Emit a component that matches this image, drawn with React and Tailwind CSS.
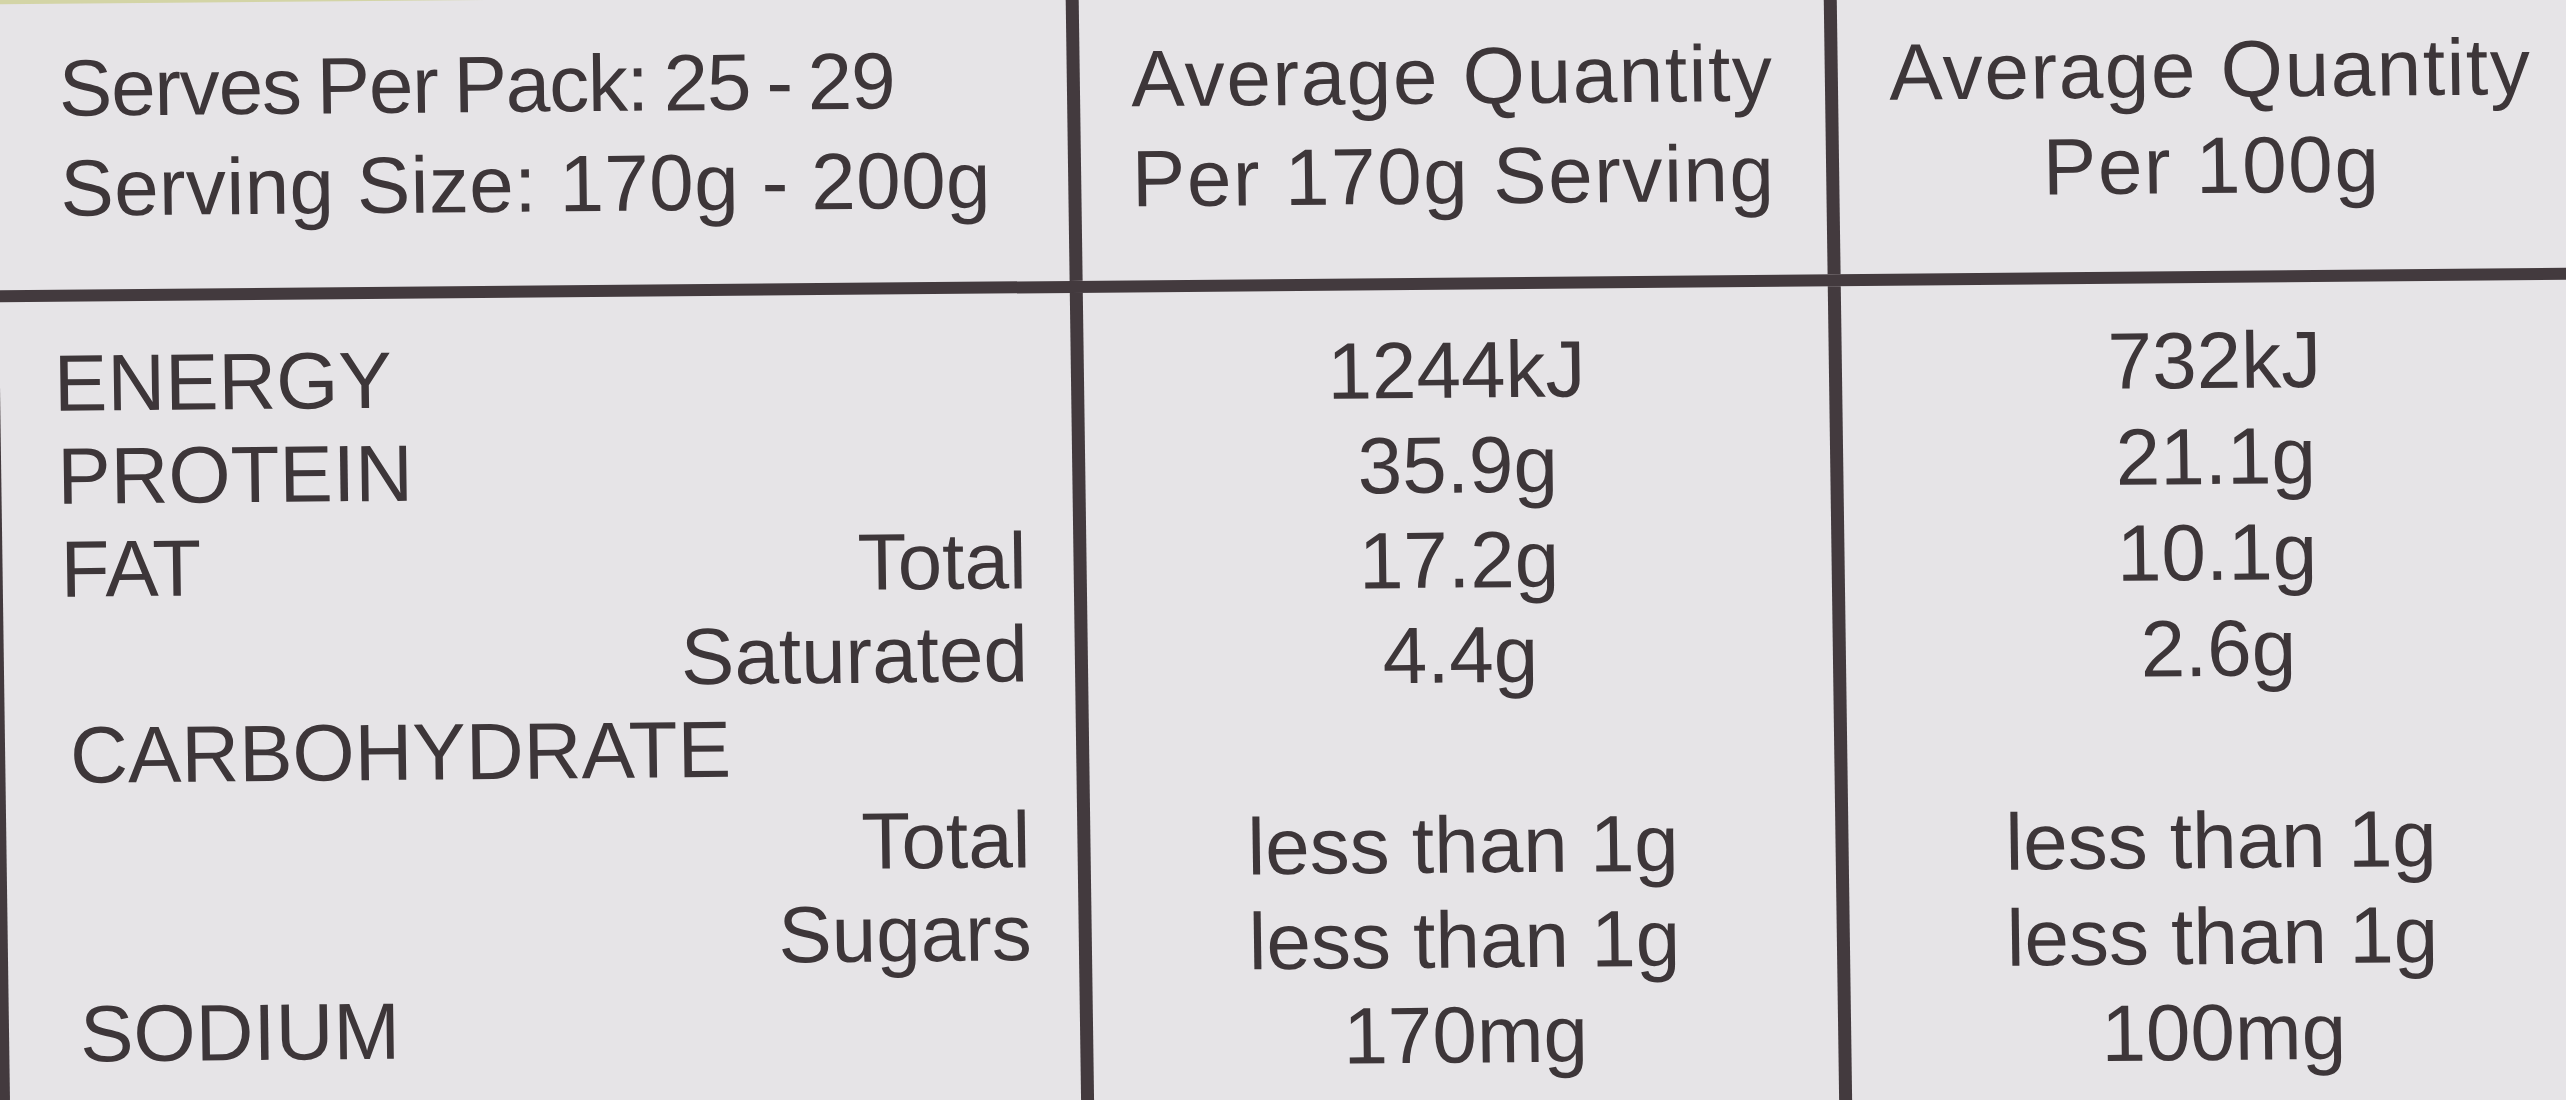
const rows = [
  { label: "ENERGY", pad: "pl-[54px]", sub: "", a: "1244kJ", b: "732kJ" },
  { label: "PROTEIN", pad: "pl-[56px]", sub: "", a: "35.9g", b: "21.1g" },
  { label: "FAT", pad: "pl-[58px]", sub: "Total", a: "17.2g", b: "10.1g" },
  { label: "", pad: "pl-[58px]", sub: "Saturated", a: "4.4g", b: "2.6g" },
  { label: "CARBOHYDRATE", pad: "pl-[65px]", sub: "", a: "", b: "" },
  { label: "", pad: "pl-[65px]", sub: "Total", a: "less than 1g", b: "less than 1g" },
  { label: "", pad: "pl-[65px]", sub: "Sugars", a: "less than 1g", b: "less than 1g" },
  { label: "SODIUM", pad: "pl-[71px]", sub: "", a: "170mg", b: "100mg" },
];

export default function App() {
  return (
    <div className="w-[2566px] h-[1100px] overflow-hidden bg-[#d3d4a6] font-['Liberation_Sans',Arial,sans-serif] text-[80px] text-[#3d3639]">
      {/* the label itself, a bit tilted like the photo */}
      <div className="ml-[-10px] mt-[-7px] w-[2600px] h-[1200px] flex flex-col bg-[#e6e4e7] [transform:rotate(-0.5deg)_skewX(0.3deg)]">
        <div className="flex h-[298px] border-b-[12px] border-[#433a3e]">
          <div className="w-[1084px] border-l-[13px] border-[#433a3e] pl-[63px] pt-[35px] leading-[100px] whitespace-nowrap">
            <div className="tracking-[-0.015em] [word-spacing:-5px]">Serves Per Pack: 25 - 29</div>
            <div className="tracking-[0.005em]">Serving Size: 170g - 200g</div>
          </div>
          <div className="w-[758px] border-l-[13px] border-[#433a3e] pt-[35px] leading-[100px] text-center tracking-[0.02em] whitespace-nowrap">
            <div>Average Quantity</div>
            <div>Per 170g Serving</div>
          </div>
          <div className="flex-1 border-l-[13px] border-[#433a3e] pt-[37px] leading-[96px] text-center tracking-[0.02em] whitespace-nowrap">
            <div>Average Quantity</div>
            <div>Per 100g</div>
          </div>
        </div>

        <div className="flex flex-1">
          <div className="w-[1084px] border-l-[13px] border-[#433a3e] pt-[35px] pr-[47px] leading-[93px] whitespace-nowrap">
            {rows.map((r, i) => (
              <div key={i} className={`flex justify-between h-[93px] ${r.pad}`}>
                <span>{r.label}</span>
                <span>{r.sub}</span>
              </div>
            ))}
          </div>
          <div className="w-[758px] border-l-[13px] border-[#433a3e] pt-[33px] leading-[95px] text-center whitespace-nowrap">
            {rows.map((r, i) => (
              <div key={i} className="h-[95px]">{r.a}</div>
            ))}
          </div>
          <div className="flex-1 border-l-[13px] border-[#433a3e] pt-[30px] leading-[96px] text-center whitespace-nowrap">
            {rows.map((r, i) => (
              <div key={i} className="h-[96px]">{r.b}</div>
            ))}
          </div>
        </div>
      </div>
    </div>
  );
}
